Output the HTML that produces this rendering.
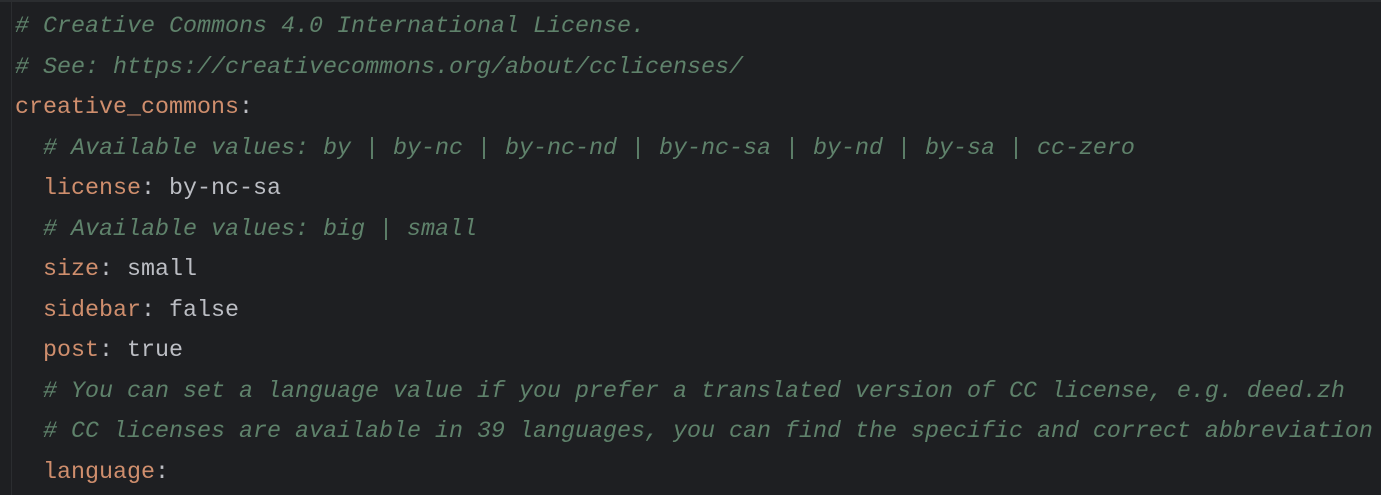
<!DOCTYPE html>
<html><head><meta charset="utf-8"><style>
html,body{margin:0;padding:0;background:#1e1f22;width:1381px;height:495px;overflow:hidden}
.top{position:absolute;left:0;top:0;width:1381px;height:2px;background:#2b2d30}
.guide{position:absolute;left:11px;top:2px;width:1px;height:493px;background:#2b2d30}
pre{position:absolute;left:15px;top:7px;margin:0;font-family:"Liberation Mono",monospace;font-size:23.33px;line-height:40.5px;color:#bcbec4;white-space:pre}
.c{color:#5f826b;font-style:italic}
.k{color:#cf8e6d}
</style></head><body><div class="top"></div><div class="guide"></div>
<pre><span class="c"># Creative Commons 4.0 International License.</span>
<span class="c"># See: https://creativecommons.org/about/cclicenses/</span>
<span class="k">creative_commons</span>:
  <span class="c"># Available values: by | by-nc | by-nc-nd | by-nc-sa | by-nd | by-sa | cc-zero</span>
  <span class="k">license</span>: by-nc-sa
  <span class="c"># Available values: big | small</span>
  <span class="k">size</span>: small
  <span class="k">sidebar</span>: false
  <span class="k">post</span>: true
  <span class="c"># You can set a language value if you prefer a translated version of CC license, e.g. deed.zh</span>
  <span class="c"># CC licenses are available in 39 languages, you can find the specific and correct abbreviation</span>
  <span class="k">language</span>:</pre>
</body></html>
